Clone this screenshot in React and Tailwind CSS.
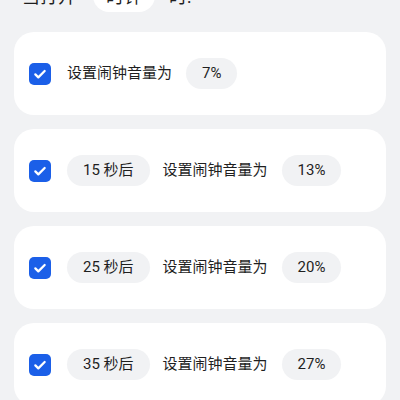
const ROWS = [
  { delay: null, volume: '7%' },
  { delay: '15 秒后', volume: '13%' },
  { delay: '25 秒后', volume: '20%' },
  { delay: '35 秒后', volume: '27%' },
];

function Checkbox() {
  return (
    <span className="flex h-[22px] w-[22px] shrink-0 items-center justify-center rounded-[5px] bg-[#1b5fe8]">
      <svg width="16" height="16" viewBox="0 0 24 24" fill="none">
        <path
          d="M5 12.5l4.5 4.5L19 7.5"
          stroke="#fff"
          strokeWidth="3.4"
          strokeLinecap="round"
          strokeLinejoin="round"
        />
      </svg>
    </span>
  );
}

function Pill({ children, className = '' }) {
  return (
    <span
      className={`flex h-[31px] items-center rounded-full bg-[#f1f2f4] px-4 text-[15px] text-[#1f1f1f] ${className}`}
    >
      {children}
    </span>
  );
}

function Row({ delay, volume }) {
  return (
    <div className="flex h-[83px] items-center rounded-[20px] bg-white pl-[15px]">
      <Checkbox />
      {delay && <Pill className="ml-4">{delay}</Pill>}
      <span className={`text-[15px] text-[#1f1f1f] ${delay ? 'ml-[13px]' : 'ml-4'}`}>
        设置闹钟音量为
      </span>
      <Pill className="ml-[14px]">{volume}</Pill>
    </div>
  );
}

export default function App() {
  return (
    <div
      className="h-[400px] w-[400px] overflow-hidden bg-[#f1f2f4]"
      style={{ fontFamily: 'Roboto, "Noto Sans CJK SC", sans-serif' }}
    >
      <div className="-mt-5 flex h-8 items-center pl-[22px] text-[18px] text-[#1f1f1f]">
        <span>当打开</span>
        <span className="ml-[17px] flex h-8 items-center rounded-full bg-white px-[13px]">时钟</span>
        <span className="ml-[14px]">时:</span>
      </div>
      <div className="mt-5 flex flex-col gap-[14px] px-[14px]">
        {ROWS.map((r, i) => (
          <Row key={i} {...r} />
        ))}
      </div>
    </div>
  );
}
